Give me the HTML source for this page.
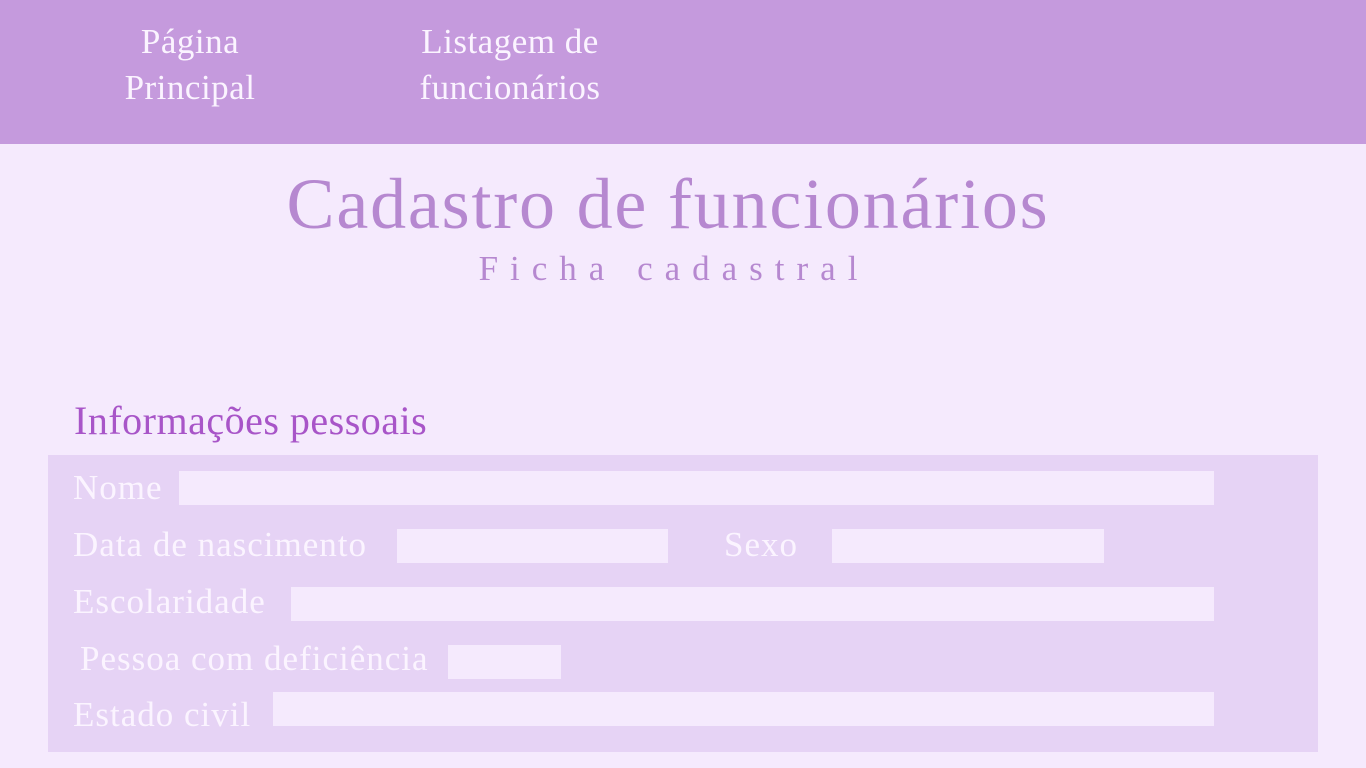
<!DOCTYPE html>
<html><head><meta charset="utf-8"><style>
*{margin:0;padding:0;box-sizing:border-box}
body{width:1366px;height:768px;background:#F5EAFD;font-family:"Liberation Serif",serif;position:relative;overflow:hidden}
.hdr{position:absolute;left:0;top:0;width:1366px;height:144px;background:#C59ADD}
.nav{position:absolute;top:19px;color:#FBF4FF;font-size:35px;line-height:46px;text-align:center;letter-spacing:0.5px}
.t{position:absolute;left:0;width:1336px;text-align:center;color:#B688D0;white-space:nowrap}
.box{position:absolute;left:48px;top:455px;width:1270px;height:297px;background:#E6D3F5}
.l{position:absolute;color:#FBF4FF;font-size:35px;letter-spacing:1px;white-space:nowrap;line-height:40px}
.i{position:absolute;background:#F5EAFD;height:34px}
</style></head><body>
<div class="hdr"></div>
<div class="nav" style="left:90px;width:200px">Página<br>Principal</div>
<div class="nav" style="left:390px;width:240px">Listagem de<br>funcionários</div>
<div class="t" style="top:163px;left:0;width:1336px;font-size:72px;letter-spacing:1.8px">Cadastro de funcionários</div>
<div class="t" style="top:249px;left:6px;width:1336px;font-size:35px;letter-spacing:12px">Ficha cadastral</div>
<div style="position:absolute;left:74px;top:397px;color:#A855C8;font-size:40px;letter-spacing:0.5px">Informações pessoais</div>
<div class="box"></div>
<div class="l" style="left:73px;top:468px">Nome</div><div class="i" style="left:179px;top:471px;width:1035px"></div>
<div class="l" style="left:73px;top:525px">Data de nascimento</div><div class="i" style="left:397px;top:529px;width:271px"></div>
<div class="l" style="left:724px;top:525px">Sexo</div><div class="i" style="left:832px;top:529px;width:272px"></div>
<div class="l" style="left:73px;top:582px">Escolaridade</div><div class="i" style="left:291px;top:587px;width:923px"></div>
<div class="l" style="left:80px;top:639px">Pessoa com deficiência</div><div class="i" style="left:448px;top:645px;width:113px"></div>
<div class="l" style="left:73px;top:695px">Estado civil</div><div class="i" style="left:273px;top:692px;width:941px"></div>
</body></html>
